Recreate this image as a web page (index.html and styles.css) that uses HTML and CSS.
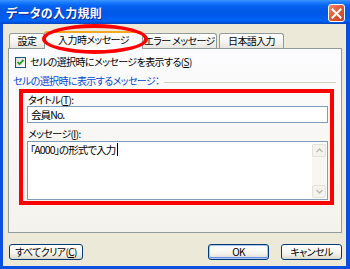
FILE: index.html
```html
<!DOCTYPE html>
<html lang="ja">
<head>
    <meta charset="UTF-8">
    <title>データの入力規則</title>
    <link rel="stylesheet" href="styles.css">
</head>
<body>

    <div class="window">
        <div class="titlebar">
            <span class="title">データの入力規則</span>
            <span class="close">
                <svg width="11" height="11" viewBox="0 0 11 11">
                    <path d="M1.5 1.5 L9.5 9.5 M9.5 1.5 L1.5 9.5" stroke="#fff" stroke-width="2" stroke-linecap="square"/>
                </svg>
            </span>
        </div>

        <div class="frame">
            <div class="tabs">
                <div class="tab tab-1">設定</div>
                <div class="tab tab-2 active">入力時メッセージ</div>
                <div class="tab tab-3">エラー メッセージ</div>
                <div class="tab tab-4">日本語入力</div>
            </div>

            <div class="panel">
                <div class="check">
                    <span class="box">
                        <svg width="9" height="9" viewBox="0 0 9 9">
                            <path d="M1.5 4 L3.5 6.2 L7.5 1.8" fill="none" stroke="#21a121" stroke-width="1.8"/>
                        </svg>
                    </span>
                    <span>セルの選択時にメッセージを表示する(<u>S</u>)</span>
                </div>

                <div class="group-label">
                    <span>セルの選択時に表示するメッセージ：</span>
                </div>

                <!-- 赤枠（注釈） -->
                <div class="highlight">
                    <div class="field-label">タイトル(<u>T</u>):</div>
                    <div class="input">会員No.</div>
                    <div class="field-label second">メッセージ(<u>I</u>):</div>
                    <div class="textarea">
                        <span class="text">「A000」の形式で入力<span class="caret"></span></span>
                        <div class="scrollbar">
                            <span class="sb-btn">
                                <svg width="7" height="5" viewBox="0 0 7 5"><path d="M0.5 4 L3.5 1 L6.5 4" fill="none" stroke="#b8b8ae" stroke-width="1.3"/></svg>
                            </span>
                            <span class="sb-btn">
                                <svg width="7" height="5" viewBox="0 0 7 5"><path d="M0.5 1 L3.5 4 L6.5 1" fill="none" stroke="#b8b8ae" stroke-width="1.3"/></svg>
                            </span>
                        </div>
                    </div>
                </div>
            </div>

            <div class="buttons">
                <button class="btn btn-clear">すべてクリア(<u>C</u>)</button>
                <div class="btn-group">
                    <button class="btn btn-default">OK</button>
                    <button class="btn">キャンセル</button>
                </div>
            </div>
        </div>

        <!-- 赤丸（注釈） -->
        <div class="ellipse"></div>
    </div>

</body>
</html>
```

FILE: styles.css
```css
* {
    box-sizing: border-box;
}

body {
    margin: 0;
    padding: 0;
    font-family: "Noto Sans CJK JP", "Noto Sans", sans-serif;
    font-size: 10px;
    font-feature-settings: "palt";
    letter-spacing: -0.6px;
    color: #000;
}

.window {
    position: relative;
    width: 350px;
    height: 269px;
    background: #0a50df;
    display: flex;
    flex-direction: column;
    overflow: hidden;
}

.titlebar {
    height: 24px;
    display: flex;
    align-items: center;
    justify-content: space-between;
    padding: 0 5px 0 6px;
    background: linear-gradient(#3d95ff 0%, #1a7cff 10%, #0562f0 25%, #0058e6 50%, #005bef 70%, #0063f7 85%, #0050d8 95%, #0044bb 100%);
}

.title {
    color: #fff;
    font-size: 12px;
    font-weight: bold;
    letter-spacing: 0.3px;
    text-shadow: 1px 1px 0 #0a2a9a;
}

.close {
    width: 17px;
    height: 18px;
    margin-top: 2px;
    display: flex;
    align-items: center;
    justify-content: center;
    border: 1px solid #fff;
    border-radius: 3px;
    background: linear-gradient(135deg, #f0896c 0%, #e25a3a 45%, #c9401f 100%);
}

.frame {
    flex: 1;
    margin: 0 4px 3px 3px;
    padding: 7px 0 0 5px;
    background: #ece9d8;
}

/* タブ */
.tabs {
    display: flex;
    align-items: flex-end;
    height: 17px;
    padding-left: 1px;
}

.tab {
    height: 15px;
    line-height: 13px;
    text-align: center;
    border: 1px solid #919b9c;
    border-bottom: none;
    border-radius: 3px 3px 0 0;
    background: linear-gradient(#ffffff, #f3f3ef 60%, #e6e5de);
    white-space: nowrap;
}

.tab-1 { width: 36px; }
.tab-2 { width: 99px; }
.tab-3 { width: 75px; }
.tab-4 { width: 65px; margin-left: 2px; }

.tab.active {
    position: relative;
    z-index: 1;
    height: 18px;
    line-height: 14px;
    margin-bottom: -1px;
    margin-left: -1px;
    margin-right: -1px;
    border-top: 2px solid #f5a623;
    background: #fcfcfe;
}

/* パネル */
.panel {
    width: 334px;
    height: 185px;
    border: 1px solid #919b9c;
    background: linear-gradient(#fcfcfe, #f7f6f2 60%, #f3f2ec);
}

.check {
    display: flex;
    align-items: center;
    gap: 4px;
    margin: 7px 0 0 6px;
    height: 12px;
    line-height: 12px;
}

.check .box {
    width: 11px;
    height: 11px;
    display: flex;
    align-items: center;
    justify-content: center;
    border: 1px solid #1c5180;
    background: linear-gradient(135deg, #dcdcd7, #fff);
}

.group-label {
    display: flex;
    align-items: center;
    margin: 6px 5px 0 4px;
    height: 12px;
    color: #0046d5;
}

.group-label::after {
    content: "";
    flex: 1;
    height: 1px;
    margin: 4px 0 0 4px;
    background: #d0d0bf;
}

.highlight {
    margin: 3px 7px 0 10px;
    padding: 0 2px 1px 4px;
    border: 4px solid #ff0000;
}

.field-label {
    height: 13px;
    line-height: 13px;
    padding-left: 1px;
}

.field-label.second {
    height: 18px;
    line-height: 14px;
    padding-top: 4px;
}

.input {
    height: 17px;
    line-height: 15px;
    padding-left: 3px;
    border: 1px solid #7f9db9;
    background: #fff;
    font-size: 10.5px;
    letter-spacing: -0.9px;
}

.textarea {
    position: relative;
    height: 59px;
    display: flex;
    justify-content: space-between;
    border: 1px solid #7f9db9;
    background: #fff;
}

.textarea .text {
    padding: 1px 0 0 2px;
    font-size: 10.5px;
    letter-spacing: -0.9px;
    line-height: 13px;
}

.caret {
    display: inline-block;
    width: 1px;
    height: 13px;
    margin-left: 2px;
    vertical-align: top;
    background: #000;
}

.scrollbar {
    width: 14px;
    margin: 2px 1px 1px 0;
    display: flex;
    flex-direction: column;
    justify-content: space-between;
    background: #f7f6f1;
}

.sb-btn {
    height: 13px;
    display: flex;
    align-items: center;
    justify-content: center;
    border: 1px solid #e2e1da;
    border-radius: 2px;
    background: #f4f3ee;
}

/* ボタン */
.buttons {
    display: flex;
    justify-content: space-between;
    align-items: center;
    margin-top: 11px;
    padding-left: 1px;
    width: 334px;
}

.btn-group {
    display: flex;
    gap: 12px;
}

.btn {
    height: 16px;
    width: 61px;
    padding: 0;
    font-family: inherit;
    font-size: 10px;
    font-feature-settings: "palt";
    letter-spacing: -0.6px;
    line-height: 14px;
    border: 1px solid #003c74;
    border-radius: 3px;
    background: linear-gradient(#ffffff, #f4f3ee 60%, #e3e0d4 90%, #d6d0c5);
    color: #000;
}

.btn-clear {
    width: 74px;
}

.btn-default {
    box-shadow: inset 0 0 0 1px #a9c5f5, inset 0 -1px 0 1px #6a8eea;
}

/* 赤丸（注釈） */
.ellipse {
    position: absolute;
    left: 42px;
    top: 24px;
    width: 106px;
    height: 30px;
    border: 4px solid #ff0000;
    border-radius: 50%;
    z-index: 2;
}
```
